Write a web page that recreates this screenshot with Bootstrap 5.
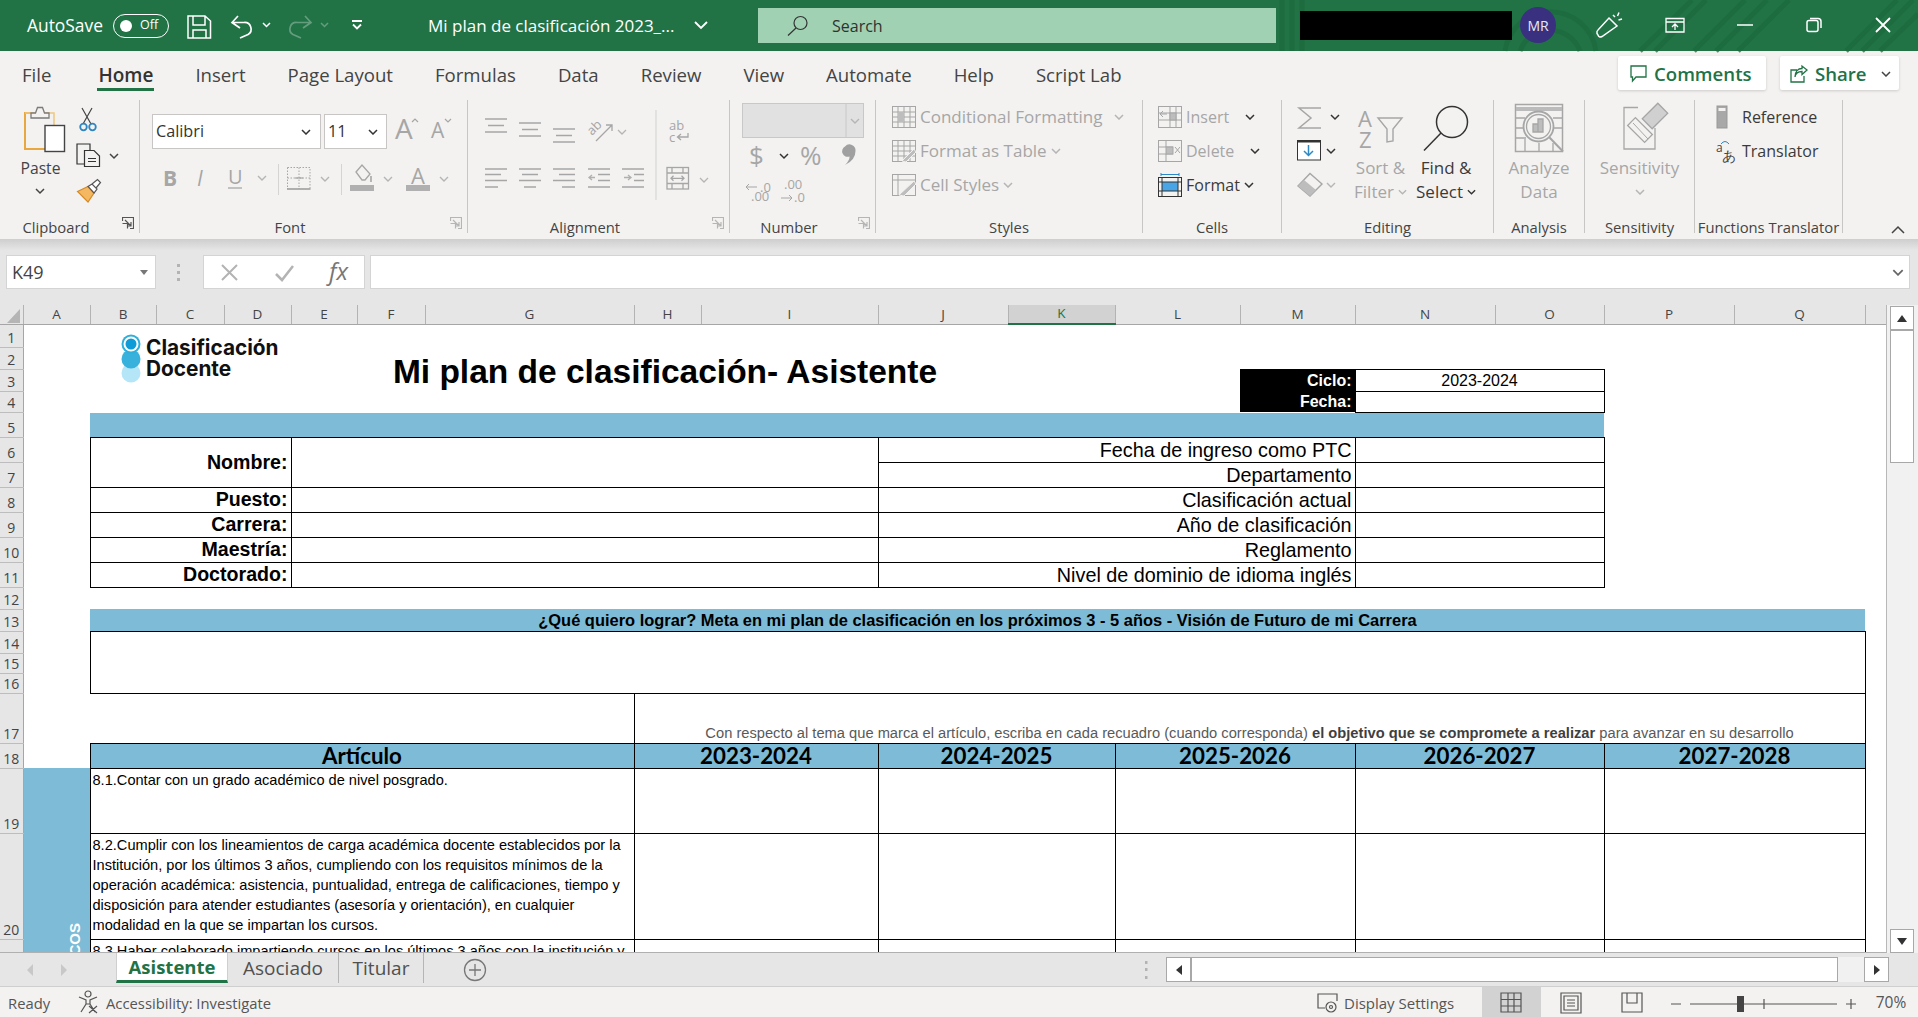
<!DOCTYPE html>
<html lang="es"><head><meta charset="utf-8"><title>Mi plan de clasificación</title>
<link href="https://cdn.jsdelivr.net/npm/bootstrap@5.3.0/dist/css/bootstrap.min.css" rel="stylesheet">
<style>
html,body{height:100%;overflow:hidden}
body{font-family:"Open Sans","Noto Sans",sans-serif;background:#e6e6e6;color:#3b3a39;width:1918px;height:1017px}
svg{display:block;flex:none;overflow:visible}
svg text{font-family:"Open Sans","Noto Sans",sans-serif}
.appbar{height:51px;background:#217346;color:#fff;position:relative}
.decor{position:absolute;left:0;top:0}
.appbar>*:not(.decor){position:relative}
.asv{padding-left:27px;width:103px;font-size:17.4px;white-space:nowrap}
.tgl{margin-left:10px;width:56px;height:24px;border:1.5px solid #fff;border-radius:12px;font-size:12.5px;padding-left:6px;gap:8px}
.tgl i{width:12px;height:12px;border-radius:50%;background:#fff;display:block}
.doc{width:249px;font-size:17px;white-space:nowrap}
.srch{width:518px;height:35px;background:#a0d1b3;color:#323130;font-size:16px;padding-left:29px;gap:24px}
.blk{margin-left:24px;width:212px;height:29px;background:#000}
.rib{height:188px;background:#f3f2f1}
.rtabs{height:44px}
.tabz{padding-left:22px;padding-top:4px;gap:42px;font-size:18.6px;color:#444}
.tabz span{position:relative;white-space:nowrap}
.tabz span:first-child{margin-right:5px}
.tabz .on{font-weight:600;color:#333;font-size:19px}
.tabz .on::after{content:"";position:absolute;left:-1px;right:-1px;top:27px;height:3px;background:#217346}
.cbtn{height:34px;margin-top:5px;background:#fff;box-shadow:0 1px 3px rgba(0,0,0,.16);border-radius:2px;color:#217346;font-weight:600;font-size:18.6px;gap:7px;white-space:nowrap;padding-top:1px}
.cmm{width:148px;padding-left:12px}
.shr{width:119px;margin-left:14px;margin-right:19px;padding-left:10px}
.grp{display:flex;flex-direction:column;flex:none;height:144px}
.sepr{width:1px;height:133px;margin-top:5px;background:#c8c6c4;flex:none}
.gbody{height:122px;flex:none}
.glab{height:22px;line-height:20px;font-size:14.8px;color:#444;white-space:nowrap;padding-right:5px}
.glab>span{flex:1;text-align:center;padding-right:10px}
.glab.nl{padding-right:0}
.glab.nl>span{padding-right:0}
.w-clip{width:139px}.w-font{width:327px}.w-ali{width:261px}.w-num{width:145px}.w-sty{width:266px}.w-cel{width:138px}.w-edi{width:211px}.w-ana{width:90px}.w-sen{width:109px}.w-fun{width:147px}
.pst{width:81px;font-size:15.7px;color:#444}
.pst span{height:30px;line-height:28px}
.ptfont{padding-top:19px}
.fsel{height:35px;background:#fff;border:1px solid #c8c6c4;font-size:16.2px;color:#333}
.fn{width:169px;margin-left:12px;padding:0 9px 0 3px}
.sz{width:63px;margin-left:3px;padding:0 8px 0 3px}
.rows3{padding-top:5px}
.rw3{height:34px;font-size:17px;white-space:nowrap;gap:4px}
.pcel .rw3,.ref{font-size:16px}
.dim{color:#a6a6a6}.dk{color:#3b3a39}
.psty{padding-left:16px}.pcel{padding-left:15px}
.mscell{margin-left:12px}.mscel2{margin-left:12px}
.vcl{display:flex;flex-direction:column;align-items:center;font-size:17px;padding-top:6px;white-space:nowrap}
.vcl span{height:23.5px;line-height:22px}
.c-sort{width:61px}.c-find{width:70px}.c-a{width:90px}.c-s{width:109px}
.ref{padding-left:21px;gap:4px}
.colp{margin-left:auto;margin-right:13px}
.mecl{margin-top:8px}
.fbar{height:66px;background:linear-gradient(#cecece 0,#e3e3e3 10px,#e6e6e6 12px);padding-top:16px}
.bxw{height:34px;background:#fff;border:1px solid #d4d4d4}
.nbox{margin-left:6px;width:150px;font-size:18px;padding:0 7px 0 5px;color:#444}
.fxb{margin-left:0;width:162px}
.finp{margin-left:5px;width:1540px;padding-right:5px}
.sheet{height:648px;position:relative;background:#f1f1f1}
.grid{width:1887px;height:648px;overflow:hidden;background:#fff;border-right:1px solid #b8b8b8;flex:none;position:relative;border-bottom:1px solid #b0b0b0}
.xl{table-layout:fixed;width:1887px;border-collapse:collapse;font-family:"Liberation Sans",Arial,sans-serif;color:#000}
.xl td,.xl th{padding:0;overflow:hidden;white-space:nowrap;line-height:1}
.xl .ch{height:19px;background:#e6e6e6;font:400 13.5px/1 "Open Sans",sans-serif;color:#444;text-align:center;border-right:1px solid #b3b3b3;border-bottom:1px solid #a6a6a6}
.xl .ch.sel{background:#d2d2d2;color:#217346;border-bottom:2px solid #217346}
.xl .ch.nob{border-right:0}
.xl .rh{background:#e6e6e6;font:400 14px/1 "Open Sans",sans-serif;color:#444;text-align:center;vertical-align:bottom;border-right:1px solid #a6a6a6;border-bottom:1px solid #bdbdbd;padding-bottom:2px}
.corner{position:relative}
.corner::after{content:"";position:absolute;right:3px;bottom:1px;width:0;height:0;border-left:13px solid transparent;border-bottom:14px solid #b5b5b5}
.h23{height:23px}.h22{height:22px}.h21{height:21px}.h25{height:25px}.h20{height:20px}.h50{height:50px}.h65{height:65px}.h106{height:106px}.h60{height:60px}
.c23{width:23px}.c67{width:67px}.c68{width:68px}.c66{width:66px}.c209{width:209px}.c177{width:177px}.c130{width:130px}.c107{width:107px}.c125{width:125px}.c115{width:115px}.c140{width:140px}.c109{width:109px}.c131{width:131px}.c22{width:22px}
.xl .bd{border:1px solid #000}
.bl{background:#7dbbd7}
.ttl{font-size:33.5px;font-weight:700;padding-top:6px!important;text-align:center;vertical-align:middle}
.lb{font-size:19.6px;font-weight:700;text-align:right;padding-right:3px!important;padding-top:1px!important}
.rt{font-size:19.8px;text-align:right;padding-right:3px!important;padding-top:2px!important}
.blkc{background:#000;color:#fff;font-weight:700;font-size:16px;text-align:right;padding-right:3px!important;padding-top:1px!important}
.vl{font-size:16px;text-align:center;padding-top:1px!important}
.h13{font-size:16.45px;font-weight:700;text-align:center}
.nt{font-size:14.7px;color:#595959;text-align:center;vertical-align:bottom;padding-bottom:2px!important}
.nt b{color:#3f3f3f}
.hd{font:700 22.3px/1 Lato,sans-serif;text-align:center;padding-top:1px!important}
.tx{font-size:14.6px;line-height:20px!important;vertical-align:top;padding:1px 2px 0!important}
.xl td.cos{background:#7dbbd7;vertical-align:top;padding:155px 0 0 43px}
.cos span{display:block;writing-mode:vertical-rl;transform:rotate(180deg);color:#fff;font-weight:700;font-size:15px;line-height:1}
.logo{position:absolute;left:121px;top:24px;gap:5px}
.logo div{font:700 20.8px/21px Inter,sans-serif;color:#111;padding-top:8px}
.vsb{width:31px;padding:1px 4px 0 3px;background:#f1f1f1}
.sbb{height:24px;background:#fff;border:1px solid #a8a8a8;flex:none}
.sbt{height:133px;background:#fff;border:1px solid #a8a8a8;flex:none}
.tabs{height:34px;background:#e6e6e6;border-bottom:1px solid #cfcfcf}
.stab{height:30px;font-size:19px;white-space:nowrap;padding-top:1px}
.stab.act{width:112px;background:#fff;color:#217346;font-weight:700;font-size:18.5px;border-bottom:3px solid #217346;border-left:1px solid #cfcfcf;border-right:1px solid #cfcfcf}
.stab.a2{width:111px;border-right:1px solid #b5b5b5;color:#505050}
.stab.a3{width:85px;border-right:1px solid #b5b5b5;color:#505050}
.hsb{height:25px;margin-top:4px;background:#fff;border:1px solid #a8a8a8;width:647px;flex:none}
.hsbtn{height:25px;margin-top:4px;width:25px;background:#fff;border:1px solid #a8a8a8;flex:none}
.hstr{height:25px;margin-top:4px;width:26px;background:#f1f1f1;flex:none}
.stat{height:30px;background:#f3f2f1;font-size:14.8px;color:#555;white-space:nowrap}
.stat>div{padding-top:2px}
.rdy{padding-left:8px;width:78px}
.acc{margin-left:6px;width:1211px}
.ds{width:165px;gap:5px;font-size:15px}
.zm{width:51px;text-align:center;padding-right:3px;font-size:15.5px}
</style></head>
<body class="d-flex flex-column">
<svg width="0" height="0" class="position-absolute"><defs>
<symbol id="chev" viewBox="0 0 10 6"><polyline points="1,1 5,5 9,1" fill="none" stroke="currentColor" stroke-width="1.5"/></symbol>
<symbol id="lnch" viewBox="0 0 12 12"><path d="M.5 4V.5H11.5V11.5H8M3 3L9 9M5 9H9V5M.5 6.500H5.500V11.500" fill="none" stroke="currentColor" stroke-width="1.2"/></symbol>
</defs></svg>

<header class="appbar d-flex align-items-center flex-none">
<svg class="decor" width="1918" height="51" viewBox="0 0 1918 51"><g fill="none" stroke="#1c6a3e" stroke-width="5" opacity=".75"><path d="M1282 0V51M1292 0V51M1302 0V51M1520 51A32 32 0 0 1 1580 51M1505 51A46 46 0 0 1 1596 51M1640 51L1692 0M1655 51L1706 0M1694 51L1745 0M1716 51L1767 0M1738 51L1789 0M1862 51L1913 0M1880 51L1918 14M1846 51L1897 0"/></g></svg>
<div class="asv">AutoSave</div>
<div class="tgl d-flex align-items-center"><i></i><span>Off</span></div>
<svg width="259" height="51" viewBox="169 0 259 51" fill="none" stroke="#fff" stroke-width="1.5">
<path d="M188 16H205L210.500 21V38H188ZM193 16V25H205V16M193 38V30H206V38"/>
<path d="M238 16L232 22.500L240 28M232 22.500H244A6.500 6.500 0 0 1 248 34.500L240 38" stroke-width="1.700"/>
<polyline points="263,23 266.500,26.500 270,23"/>
<g opacity=".3"><path d="M305 16L311 22.500L303 28M311 22.500H297A6.500 6.500 0 0 0 293 34.500L301 38" stroke-width="1.700"/><polyline points="321,23 324.500,26.500 328,23"/></g>
<path d="M352 21H362M353 24.500L357 28.500L361 24.500" stroke-width="1.800"/>
</svg>
<div class="doc">Mi plan de clasificación 2023_...</div>
<svg width="81" height="51" viewBox="677 0 81 51"><polyline points="695,22 701,28 707,22" fill="none" stroke="#fff" stroke-width="1.800"/></svg>
<div class="srch d-flex align-items-center">
<svg width="21" height="20" viewBox="0 0 21 20" fill="none" stroke="#333" stroke-width="1.200"><circle cx="13.500" cy="7" r="6.500"/><path d="M9 12L1 19.500"/></svg>
<span>Search</span></div>
<div class="blk"></div>
<svg width="406" height="51" viewBox="1512 0 406 51" fill="none" stroke="#fff" stroke-width="1.500">
<circle cx="1538" cy="25" r="18" fill="#39307f" stroke="none"/>
<text x="1538" y="30.500" text-anchor="middle" font-size="14" fill="#e8e8f0" stroke="none">MR</text>
<path d="M1609 18L1617 26L1602 36.500Q1599 38 1598 35L1597 33.500Q1596.500 31 1598 30ZM1613 15L1615 17M1619 12.500L1617.500 16M1622 19L1618.500 20"/>
<path d="M1666 18.500H1684V32H1666ZM1666 22H1684M1675 30V24.500M1672 27L1675 24L1678 27" stroke-width="1.300"/>
<path d="M1737 25H1753"/>
<path d="M1807 22.500A2 2 0 0 1 1809 20.500H1816A2 2 0 0 1 1818 22.500V29.500A2 2 0 0 1 1816 31.500H1809A2 2 0 0 1 1807 29.500ZM1810 18.500H1818A3 3 0 0 1 1821 21.500V28"/>
<path d="M1876 18L1890 32M1890 18L1876 32" stroke-width="1.800"/>
</svg>
</header>

<section class="rib flex-none">
<div class="rtabs d-flex">
<div class="tabz d-flex align-items-center"><span>File</span><span class="on">Home</span><span>Insert</span><span>Page Layout</span><span>Formulas</span><span>Data</span><span>Review</span><span>View</span><span>Automate</span><span>Help</span><span>Script Lab</span></div>
<div class="ms-auto d-flex">
<div class="cbtn cmm d-flex align-items-center"><svg width="17" height="18" viewBox="0 0 17 18" fill="none" stroke="#217346" stroke-width="1.300"><path d="M1 1H16V12H6L2.500 16V12H1Z"/></svg><span>Comments</span></div>
<div class="cbtn shr d-flex align-items-center"><svg width="18" height="18" viewBox="0 0 18 18" fill="none" stroke="#217346" stroke-width="1.300"><path d="M7 5H1V17H14V11M5 12C5.500 8 8.500 6.500 12 6.500V9.500L17 5L12 1V3.500C8 3.500 5 6.500 5 12Z"/></svg><span>Share</span><svg class="ms-auto me-2" width="10" height="6" color="#444"><use href="#chev"/></svg></div>
</div></div>
<div class="d-flex">
<!-- clipboard -->
<div class="grp w-clip"><div class="gbody d-flex">
<div class="pst d-flex flex-column align-items-center"><svg width="81" height="59" viewBox="0 95 81 59" fill="none">
<path d="M31 113H25V149H46" stroke="#e9a73f" stroke-width="2"/><path d="M25 113H54V125" stroke="#f0c67f" stroke-width="1.500"/><path d="M31 118V113H35.500L37.500 107.500H42.500L44.500 113H49V118Z" stroke="#7a7a7a" fill="#f3f2f1" stroke-width="1.300"/><rect x="45" y="125.500" width="19.500" height="26" fill="#fff" stroke="#444" stroke-width="1.400"/></svg>
<span>Paste</span><svg width="81" height="14" viewBox="0 184 81 14"><polyline points="36,189 40,193 44,189" fill="none" stroke="#444" stroke-width="1.500"/></svg></div>
<svg width="58" height="122" viewBox="81 95 58 122" fill="none">
<path d="M83 108L92 124M93 108L84 124" stroke="#444" stroke-width="1.200" transform="translate(-1)"/><circle cx="83.500" cy="127" r="3.300" stroke="#2e86c1" stroke-width="1.800"/><circle cx="92.500" cy="127" r="3.300" stroke="#2e86c1" stroke-width="1.800"/>
<path d="M84 164H77V144H90L90 150M84.500 150.500H94L99.500 156V166.500H84.500ZM88 158.500H96M88 161.500H96" stroke="#333" stroke-width="1.200"/>
<polyline points="110,154 114,158 118,154" stroke="#444" stroke-width="1.500"/>
<path d="M77.500 191.500L88 186.500L94 193L88 202Z" fill="#f5b862" stroke="#d58a26" stroke-width="1.200"/><path d="M88 186.500L92 184L97 189L94 193ZM92 184L97.500 179.500L100.500 182.500L96 188" fill="#fff" stroke="#555" stroke-width="1.200"/></svg>
</div><div class="glab d-flex align-items-start"><span>Clipboard</span><svg class="flex-none" width="12" height="12" color="#555"><use href="#lnch"/></svg></div></div><div class="sepr"></div>
<!-- font -->
<div class="grp w-font"><div class="gbody">
<div class="d-flex ptfont">
<div class="fsel fn d-flex align-items-center justify-content-between"><span>Calibri</span><svg width="10" height="6" color="#333"><use href="#chev"/></svg></div>
<div class="fsel sz d-flex align-items-center justify-content-between"><span>11</span><svg width="10" height="6" color="#333"><use href="#chev"/></svg></div>
<svg width="80" height="35" viewBox="387 114 80 35"><text x="395" y="139" font-size="28" fill="#a6a6a6">A</text><text x="431" y="138" font-size="21" fill="#a6a6a6">A</text><path d="M412 122L415 119L418 122M445 119L448 122L451 119" fill="none" stroke="#a6a6a6" stroke-width="1.200"/></svg>
</div>
<svg width="327" height="52" viewBox="140 149 327 52" fill="none">
<text x="163" y="186" font-size="21" font-weight="700" fill="#a6a6a6">B</text><text x="197" y="186" font-size="21" font-style="italic" font-family="Liberation Serif" fill="#a6a6a6">I</text><text x="228" y="184" font-size="20" fill="#a6a6a6">U</text>
<path d="M228 188H242" stroke="#a6a6a6" stroke-width="1.300"/>
<g stroke="#b5b5b5" stroke-width="1.400"><polyline points="258,176 262,180 266,176"/><polyline points="321,177 325,181 329,177"/><polyline points="384,177 388,181 392,177"/><polyline points="440,177 444,181 448,177"/></g>
<path d="M278.500 164V195M341.500 164V195" stroke="#d4d4d4"/>
<path d="M287.500 167.500H310V189" stroke="#a6a6a6" stroke-dasharray="1.500 1.500"/><path d="M287.500 167.500V189M299 167.500V189M287.500 178H310" stroke="#a6a6a6" stroke-dasharray="1.500 1.500"/><path d="M287 189H310.500" stroke="#999" stroke-width="1.500"/><path d="M295 178H303" stroke="#999"/>
<path d="M356 172L362 165L370 174L365 180H362Z" stroke="#a6a6a6" stroke-width="1.300"/><path d="M371 176V182" stroke="#a6a6a6" stroke-width="1.600"/><rect x="350" y="185" width="24" height="6" fill="#b0b0b0"/>
<text x="418" y="184" text-anchor="middle" font-size="22" fill="#a6a6a6">A</text><rect x="406" y="185" width="24" height="6" fill="#b0b0b0"/>
</svg>
</div><div class="glab d-flex align-items-start"><span>Font</span><svg class="flex-none" width="12" height="12" color="#b5b5b5"><use href="#lnch"/></svg></div></div><div class="sepr"></div>
<!-- alignment -->
<div class="grp w-ali"><svg class="gbody" width="261" height="122" viewBox="468 95 261 122" fill="none" stroke="#a6a6a6" stroke-width="1.300">
<path d="M485 119H507M488 125.500H504M485 132H507M519 123H541M522 129.500H538M519 136H541M553 129H575M556 135.500H572M553 142H575"/>
<text x="0" y="0" transform="translate(592 136) rotate(-45)" font-size="13" fill="#a6a6a6" stroke="none">ab</text><path d="M596 141L612 125M606 125H612V131"/>
<polyline points="618,130 622,134 626,130" stroke="#b5b5b5"/>
<path d="M656 110V200" stroke="#d8d8d8"/>
<text x="669" y="130" font-size="13" fill="#a6a6a6" stroke="none">ab</text><text x="669" y="142" font-size="13" fill="#a6a6a6" stroke="none">c</text><path d="M688 133V137H678M681 134L677.500 137L681 140"/>
<path d="M485 169H507M485 174.500H501M485 180.500H507M485 187H498M519 169H541M522 174.500H538M519 180.500H541M524 187H536M553 169H575M559 174.500H575M553 180.500H575M562 187H575M588 169H610M598 174.500H610M598 180.500H610M588 187H610M622 169H644M634 174.500H644M634 180.500H644M622 187H644"/>
<path d="M595 177.500H589M592 175L589 177.500L592 180M624 177.500H631M628 175L631 177.500L628 180" stroke="#b0b0b0"/>
<rect x="667" y="167.500" width="21.500" height="21.500"/><path d="M667 173H688.500M667 183.500H688.500M672 167.500V173M683 167.500V173M672 183.500V189M683 183.500V189M671 178.300H684M673.500 175.800L671 178.300L673.500 180.800M681.500 175.800L684 178.300L681.500 180.800"/>
<polyline points="700,178 704,182 708,178" stroke="#b5b5b5"/></svg>
<div class="glab d-flex align-items-start"><span>Alignment</span><svg class="flex-none" width="12" height="12" color="#b5b5b5"><use href="#lnch"/></svg></div></div><div class="sepr"></div>
<!-- number -->
<div class="grp w-num"><svg class="gbody" width="145" height="122" viewBox="730 95 145 122" fill="none">
<rect x="742.500" y="103.500" width="121" height="34" fill="#e1e1e1" stroke="#c8c8c8"/><path d="M846 104V137" stroke="#c8c8c8"/><polyline points="851,119 855,123 859,119" stroke="#b5b5b5" stroke-width="1.400"/>
<text x="749" y="165" font-size="26" fill="#a6a6a6">$</text><polyline points="780,154 784,158 788,154" stroke="#333" stroke-width="1.500"/><text x="800" y="165" font-size="26" fill="#a6a6a6">%</text><path d="M845 146.500A6 6 0 0 1 855.500 151Q855.500 160 845 165Q850 160 849.500 156.500A5.500 5.500 0 0 1 845 146.500Z" fill="#a0a0a0"/>
<text x="760" y="192" font-size="13" fill="#a6a6a6">.0</text><text x="751" y="201" font-size="13" fill="#a6a6a6">.00</text><path d="M757 187H746M749 184L746 187L749 190M781 198H792M789 195L792 198L789 201" stroke="#a6a6a6"/><text x="784" y="189" font-size="13" fill="#a6a6a6">.00</text><text x="794" y="202" font-size="13" fill="#a6a6a6">.0</text></svg>
<div class="glab d-flex align-items-start"><span>Number</span><svg class="flex-none" width="12" height="12" color="#b5b5b5"><use href="#lnch"/></svg></div></div><div class="sepr"></div>
<!-- styles -->
<div class="grp w-sty"><div class="gbody rows3 psty">
<div class="rw3 dim d-flex align-items-center"><svg width="24" height="22" viewBox="0 0 24 22" fill="none" stroke="#a6a6a6"><rect x=".5" y=".5" width="23" height="21"/><path d="M.5 6H23.500M.5 11H23.500M.5 16H23.500M6 .5V21.500M12 .5V21.500M18 .5V21.500"/><rect x="6" y="6" width="6" height="10" fill="#bdbdbd" stroke="none"/></svg><span>Conditional Formatting</span><svg class="ms-2" width="10" height="6" color="#b5b5b5"><use href="#chev"/></svg></div>
<div class="rw3 dim d-flex align-items-center"><svg width="24" height="22" viewBox="0 0 24 22" fill="none" stroke="#a6a6a6"><rect x=".5" y=".5" width="23" height="21"/><path d="M.5 6H23.500M.5 11H23.500M.5 16H23.500M6 .5V21.500M12 .5V21.500M18 .5V21.500"/><path d="M10 21L22 9L24 12L14 22Z" fill="#bdbdbd" stroke="#f3f2f1"/></svg><span>Format as Table</span><svg width="10" height="6" color="#b5b5b5"><use href="#chev"/></svg></div>
<div class="rw3 dim d-flex align-items-center"><svg width="24" height="22" viewBox="0 0 24 22" fill="none" stroke="#a6a6a6"><rect x=".5" y=".5" width="23" height="21"/><path d="M.5 6H23.500M6 .5V21.500"/><path d="M7 21L22 7L24 10L12 22Z" fill="#bdbdbd" stroke="#f3f2f1"/></svg><span>Cell Styles</span><svg width="10" height="6" color="#b5b5b5"><use href="#chev"/></svg></div>
</div><div class="glab nl d-flex"><span>Styles</span></div></div><div class="sepr"></div>
<!-- cells -->
<div class="grp w-cel"><div class="gbody rows3 pcel">
<div class="rw3 dim d-flex align-items-center"><svg width="24" height="22" viewBox="0 0 24 22" fill="none" stroke="#a6a6a6"><rect x=".5" y=".5" width="23" height="21"/><path d="M12 .5V21.500M.5 7H23.500M.5 14H23.500M18 .5V21.500"/><path d="M9 8H2M5 5L2 8L5 11"/><rect x="12" y="7" width="6" height="7" fill="#bdbdbd"/></svg><span>Insert</span><svg class="mscell" width="10" height="6" color="#333"><use href="#chev"/></svg></div>
<div class="rw3 dim d-flex align-items-center"><svg width="24" height="22" viewBox="0 0 24 22" fill="none" stroke="#a6a6a6"><rect x=".5" y=".5" width="23" height="21"/><path d="M.5 7H15M.5 14H15M8 .5V7M8 14V21.500"/><rect x="8" y="7" width="7" height="7" fill="#bdbdbd"/><path d="M17 7L22 13M22 7L17 13"/></svg><span>Delete</span><svg class="mscel2" width="10" height="6" color="#333"><use href="#chev"/></svg></div>
<div class="rw3 dk d-flex align-items-center"><svg width="24" height="24" viewBox="0 0 24 24" fill="none" stroke="#333"><rect x=".5" y="4.500" width="23" height="19"/><rect x="4" y="9" width="16" height="9" fill="#4aa5e6" stroke="none"/><path d="M.5 9H23.500M.5 18H23.500M4 4.500V23.500M20 4.500V23.500"/><path d="M3 1.500H21M3 0V3M21 0V3" stroke="#2b88c4"/></svg><span>Format</span><svg width="10" height="6" color="#333"><use href="#chev"/></svg></div>
</div><div class="glab nl d-flex"><span>Cells</span></div></div><div class="sepr"></div>
<!-- editing -->
<div class="grp w-edi"><div class="gbody d-flex">
<svg width="68" height="122" viewBox="1282 95 68 122" fill="none">
<path d="M1321 108H1299L1311 118L1299 128H1321" stroke="#a6a6a6" stroke-width="1.500"/><polyline points="1331,115 1335,119 1339,115" stroke="#333" stroke-width="1.500"/>
<rect x="1297.500" y="140.500" width="23" height="19.500" fill="#fff" stroke="#333"/><path d="M1297 141.500H1321" stroke="#333" stroke-width="2"/><path d="M1308.500 145V155M1304 151L1308.500 155.500L1313 151" stroke="#2b88c4" stroke-width="1.500"/><polyline points="1327,149 1331,153 1335,149" stroke="#333" stroke-width="1.500"/>
<path d="M1298 186L1310 173.500L1322 184L1310 196Z" stroke="#a6a6a6" stroke-width="1.400"/><path d="M1298 186L1304 180L1316 190L1310 196Z" fill="#bdbdbd"/><polyline points="1327,183 1331,187 1335,183" stroke="#b5b5b5" stroke-width="1.400"/></svg>
<div class="vcl c-sort dim"><svg width="61" height="56" viewBox="1350 101 61 56" fill="none"><text x="1358" y="127" font-size="22" fill="#a6a6a6">A</text><text x="1359" y="148" font-size="22" fill="#a6a6a6">Z</text><path d="M1378 118H1402L1393 129V141L1387 142V129Z" stroke="#a6a6a6" stroke-width="1.400"/></svg><span>Sort &amp;</span><span class="d-flex align-items-center gap-1">Filter <svg width="9" height="6" color="#b5b5b5"><use href="#chev"/></svg></span></div>
<div class="vcl c-find dk"><svg width="70" height="56" viewBox="1411 101 70 56" fill="none" stroke="#333" stroke-width="1.500"><circle cx="1452" cy="122" r="15.500"/><path d="M1441 133L1424 150.500"/></svg><span>Find &amp;</span><span class="d-flex align-items-center gap-1">Select <svg width="9" height="6" color="#333"><use href="#chev"/></svg></span></div>
</div><div class="glab nl d-flex"><span>Editing</span></div></div><div class="sepr"></div>
<!-- analysis -->
<div class="grp w-ana"><div class="gbody vcl c-a dim"><svg width="90" height="56" viewBox="1494 101 90 56" fill="none" stroke="#a6a6a6" stroke-width="1.300"><rect x="1515.500" y="104.500" width="47" height="47" stroke-width="1.500"/><path d="M1516 109H1562" stroke="#bbb" stroke-width="4"/><path d="M1516 118H1525M1553 118H1562M1516 128H1524M1554 128H1562M1516 138H1526M1525 139V151M1539 143V151M1553 143V151"/><circle cx="1538.500" cy="126.500" r="15" stroke-width="1.800" fill="#f3f2f1"/><circle cx="1538.500" cy="126.500" r="12"/><path d="M1533 132V124H1538V132ZM1538 132V119H1543V132Z" fill="#bdbdbd"/><path d="M1549 137L1563 151.500" stroke-width="2"/></svg><span>Analyze</span><span>Data</span></div>
<div class="glab nl d-flex"><span>Analysis</span></div></div><div class="sepr"></div>
<!-- sensitivity -->
<div class="grp w-sen"><div class="gbody vcl c-s dim"><svg width="109" height="56" viewBox="1585 101 109 56" fill="none" stroke="#a6a6a6" stroke-width="1.300"><path d="M1638 107.500H1624V149H1655V128"/><rect x="-12" y="-5.500" width="24" height="11" transform="translate(1640 130) rotate(45)" fill="#f3f2f1"/><path d="M1633 123L1648 139" stroke-width="1"/><rect x="-11" y="-7" width="22" height="14" transform="translate(1655 116) rotate(-45)" fill="#d0d0d0" stroke="#a6a6a6"/></svg><span>Sensitivity</span><span><svg width="10" height="6" color="#b5b5b5" class="mt-2"><use href="#chev"/></svg></span></div>
<div class="glab nl d-flex"><span>Sensitivity</span></div></div><div class="sepr"></div>
<!-- functions translator -->
<div class="grp w-fun"><div class="gbody rows3">
<div class="rw3 ref d-flex align-items-center"><svg width="22" height="24" viewBox="0 0 22 24" fill="none"><rect x="1" y="1" width="10" height="22" fill="#a8a8a8" stroke="#999"/><rect x="2.500" y="3" width="7" height="3" fill="#f3f2f1"/></svg><span>Reference</span></div>
<div class="rw3 ref d-flex align-items-center"><svg width="22" height="24" viewBox="0 0 22 24"><text x="0" y="13" font-size="12" fill="#444">a</text><text x="6" y="22" font-size="14" fill="#444" font-family="Noto Sans CJK JP">あ</text><path d="M5 5Q9 0 13 5" fill="none" stroke="#2e86c1"/></svg><span>Translator</span></div>
</div><div class="glab nl d-flex"><span>Functions Translator</span></div></div><div class="sepr"></div>
<div class="colp grp"><div class="gbody"></div><svg class="mecl" width="14" height="9" viewBox="0 0 14 9"><polyline points="1,8 7,2 13,8" fill="none" stroke="#444" stroke-width="1.500"/></svg></div>
</div>
</section>

<section class="fbar d-flex flex-none">
<div class="bxw nbox d-flex align-items-center justify-content-between"><span>K49</span><svg width="8" height="5" viewBox="0 0 8 5"><path d="M0 0H8L4 5Z" fill="#777"/></svg></div>
<svg width="47" height="34" viewBox="156 255 47 34"><g fill="#b3b3b3"><rect x="177" y="264" width="3" height="3"/><rect x="177" y="271" width="3" height="3"/><rect x="177" y="278" width="3" height="3"/></g></svg>
<div class="bxw fxb"><svg width="160" height="32" viewBox="204 256 160 32" fill="none"><path d="M222 265L237 280M237 265L222 280" stroke="#b3b3b3" stroke-width="2"/><path d="M276 274L282 280L293 266" stroke="#b3b3b3" stroke-width="2.500"/><text x="329" y="280" font-size="24" font-style="italic" font-family="Liberation Serif" fill="#777">fx</text></svg></div>
<div class="bxw finp d-flex align-items-center justify-content-end"><svg width="12" height="7" color="#666"><use href="#chev"/></svg></div>
</section>

<main class="sheet d-flex flex-none">
<div class="grid">
<table class="xl">
<colgroup><col class="c23"><col class="c67"><col class="c66"><col class="c68"><col class="c67"><col class="c66"><col class="c68"><col class="c209"><col class="c67"><col class="c177"><col class="c130"><col class="c107"><col class="c125"><col class="c115"><col class="c140"><col class="c109"><col class="c130"><col class="c131"><col class="c22"></colgroup>
<tr><th class="ch corner"></th><th class="ch">A</th><th class="ch">B</th><th class="ch">C</th><th class="ch">D</th><th class="ch">E</th><th class="ch">F</th><th class="ch">G</th><th class="ch">H</th><th class="ch">I</th><th class="ch">J</th><th class="ch sel">K</th><th class="ch">L</th><th class="ch">M</th><th class="ch">N</th><th class="ch">O</th><th class="ch">P</th><th class="ch">Q</th><th class="ch nob"></th></tr>
<tr class="h23"><th class="rh">1</th><td rowspan="18"></td><td colspan="11" rowspan="4" class="ttl">Mi plan de clasificación- Asistente</td><td colspan="5" rowspan="2"></td></tr>
<tr class="h22"><th class="rh">2</th></tr>
<tr class="h22"><th class="rh">3</th><td class="blkc">Ciclo:</td><td colspan="2" class="bd vl">2023-2024</td><td colspan="2" rowspan="2"></td></tr>
<tr class="h21"><th class="rh">4</th><td class="blkc">Fecha:</td><td colspan="2" class="bd"></td></tr>
<tr class="h25"><th class="rh">5</th><td colspan="14" class="bl"></td><td colspan="2"></td></tr>
<tr class="h25"><th class="rh">6</th><td colspan="3" rowspan="2" class="bd lb">Nombre:</td><td colspan="5" rowspan="2" class="bd"></td><td colspan="4" class="bd rt">Fecha de ingreso como PTC</td><td colspan="2" class="bd"></td><td colspan="2" rowspan="6"></td></tr>
<tr class="h25"><th class="rh">7</th><td colspan="4" class="bd rt">Departamento</td><td colspan="2" class="bd"></td></tr>
<tr class="h25"><th class="rh">8</th><td colspan="3" class="bd lb">Puesto:</td><td colspan="5" class="bd"></td><td colspan="4" class="bd rt">Clasificación actual</td><td colspan="2" class="bd"></td></tr>
<tr class="h25"><th class="rh">9</th><td colspan="3" class="bd lb">Carrera:</td><td colspan="5" class="bd"></td><td colspan="4" class="bd rt">Año de clasificación</td><td colspan="2" class="bd"></td></tr>
<tr class="h25"><th class="rh">10</th><td colspan="3" class="bd lb">Maestría:</td><td colspan="5" class="bd"></td><td colspan="4" class="bd rt">Reglamento</td><td colspan="2" class="bd"></td></tr>
<tr class="h25"><th class="rh">11</th><td colspan="3" class="bd lb">Doctorado:</td><td colspan="5" class="bd"></td><td colspan="4" class="bd rt">Nivel de dominio de idioma inglés</td><td colspan="2" class="bd"></td></tr>
<tr class="h22"><th class="rh">12</th><td colspan="16"></td></tr>
<tr class="h22"><th class="rh">13</th><td colspan="16" class="bl h13">¿Qué quiero lograr? Meta en mi plan de clasificación en los próximos 3 - 5 años - Visión de Futuro de mi Carrera</td></tr>
<tr class="h22"><th class="rh">14</th><td colspan="16" rowspan="3" class="bd"></td></tr>
<tr class="h20"><th class="rh">15</th></tr>
<tr class="h20"><th class="rh">16</th></tr>
<tr class="h50"><th class="rh">17</th><td colspan="6"></td><td colspan="10" class="bd nt">Con respecto al tema que marca el artículo, escriba en cada recuadro (cuando corresponda) <b>el objetivo que se compromete a realizar</b> para avanzar en su desarrollo</td></tr>
<tr class="h25"><th class="rh">18</th><td colspan="6" class="bd bl hd">Artículo</td><td colspan="2" class="bd bl hd">2023-2024</td><td colspan="2" class="bd bl hd">2024-2025</td><td colspan="2" class="bd bl hd">2025-2026</td><td colspan="2" class="bd bl hd">2026-2027</td><td colspan="2" class="bd bl hd">2027-2028</td></tr>
<tr class="h65"><th class="rh">19</th><td rowspan="3" class="cos"><span>COS</span></td><td colspan="6" class="bd tx">8.1.Contar con un grado académico de nivel posgrado.</td><td colspan="2" class="bd"></td><td colspan="2" class="bd"></td><td colspan="2" class="bd"></td><td colspan="2" class="bd"></td><td colspan="2" class="bd"></td></tr>
<tr class="h106"><th class="rh">20</th><td colspan="6" class="bd tx">8.2.Cumplir con los lineamientos de carga académica docente establecidos por la<br>Institución, por los últimos 3 años, cumpliendo con los requisitos mínimos de la<br>operación académica: asistencia, puntualidad, entrega de calificaciones, tiempo y<br>disposición para atender estudiantes (asesoría y orientación), en cualquier<br>modalidad en la que se impartan los cursos.</td><td colspan="2" class="bd"></td><td colspan="2" class="bd"></td><td colspan="2" class="bd"></td><td colspan="2" class="bd"></td><td colspan="2" class="bd"></td></tr>
<tr class="h60"><th class="rh"></th><td colspan="6" class="bd tx">8.3.Haber colaborado impartiendo cursos en los últimos 3 años con la institución y</td><td colspan="2" class="bd"></td><td colspan="2" class="bd"></td><td colspan="2" class="bd"></td><td colspan="2" class="bd"></td><td colspan="2" class="bd"></td></tr>
</table>
<div class="logo d-flex"><svg width="20" height="52" viewBox="0 0 20 52"><circle cx="10" cy="44" r="9.500" fill="#b5e6f7"/><circle cx="10" cy="30" r="9.500" fill="#38b1dc"/><circle cx="10" cy="15" r="9.500" fill="#2fb0dc"/><circle cx="10" cy="15" r="7.500" fill="#fff"/><circle cx="10" cy="15" r="5.500" fill="#0f9bd7"/></svg><div>Clasificación<br>Docente</div></div>
</div>
<aside class="vsb d-flex flex-column">
<div class="sbb d-flex align-items-center justify-content-center"><svg width="10" height="7" viewBox="0 0 10 7"><path d="M0 7L5 0L10 7Z" fill="#333"/></svg></div>
<div class="sbt"></div><div class="flex-grow-1"></div>
<div class="sbb d-flex align-items-center justify-content-center"><svg width="10" height="7" viewBox="0 0 10 7"><path d="M0 0L5 7L10 0Z" fill="#333"/></svg></div>
</aside>
</main>

<nav class="tabs d-flex flex-none">
<svg width="116" height="34" viewBox="0 0 116 34" fill="#c8c8c8"><path d="M33 11L27 17L33 23ZM61 11L67 17L61 23Z"/></svg>
<div class="stab act d-flex align-items-center justify-content-center">Asistente</div>
<div class="stab a2 d-flex align-items-center justify-content-center">Asociado</div>
<div class="stab a3 d-flex align-items-center justify-content-center">Titular</div>
<svg width="742" height="34" viewBox="424 0 742 34" fill="none"><circle cx="475" cy="17" r="10.500" stroke="#777" stroke-width="1.300"/><path d="M475 11V23M469 17H481" stroke="#777" stroke-width="1.300"/><g fill="#b3b3b3"><rect x="1145" y="8" width="2.500" height="3"/><rect x="1145" y="15" width="2.500" height="3"/><rect x="1145" y="23" width="2.500" height="3"/></g></svg>
<div class="hsbtn d-flex align-items-center justify-content-center"><svg width="6" height="10" viewBox="0 0 6 10"><path d="M6 0L0 5L6 10Z" fill="#333"/></svg></div>
<div class="hsb"></div><div class="hstr"></div>
<div class="hsbtn d-flex align-items-center justify-content-center"><svg width="6" height="10" viewBox="0 0 6 10"><path d="M0 0L6 5L0 10Z" fill="#333"/></svg></div>
</nav>

<footer class="stat d-flex align-items-center flex-none">
<div class="rdy">Ready</div>
<svg width="22" height="24" viewBox="0 0 22 24" fill="none" stroke="#555" stroke-width="1.200"><circle cx="10" cy="4" r="3"/><path d="M1 7L8 10V14L3 22M19 7L12 10V14L17 22M8 14H12M11 16L19 23M19 16L11 23"/></svg>
<div class="acc">Accessibility: Investigate</div>
<div class="ds d-flex align-items-center"><svg width="22" height="24" viewBox="0 0 22 24" fill="none" stroke="#555" stroke-width="1.200"><path d="M8 17H1V3H20V10"/><circle cx="14" cy="16" r="5"/><circle cx="14" cy="16" r="1.500"/></svg><span>Display Settings</span></div>
<svg width="385" height="30" viewBox="1482 987 385 30" fill="none" stroke="#555" stroke-width="1.200"><rect x="1482" y="987" width="59" height="30" fill="#d2d2d2" stroke="none"/>
<path d="M1501 993H1521V1012H1501ZM1501 999.500H1521M1501 1006H1521M1508 993V1012M1514 993V1012"/>
<path d="M1561 993H1581V1013H1561ZM1564 996H1578V1010H1564ZM1567 1000H1575M1567 1003H1575M1567 1006H1575"/>
<path d="M1622 993H1642V1012H1622ZM1627 993V1003H1637V993"/>
<path d="M1671 1004H1681M1690 1004H1837M1764 999V1009M1846 1004H1856M1851 999V1009"/><rect x="1737" y="996" width="7" height="16" fill="#444" stroke="none"/></svg>
<div class="zm">70%</div>
</footer>
</body></html>
